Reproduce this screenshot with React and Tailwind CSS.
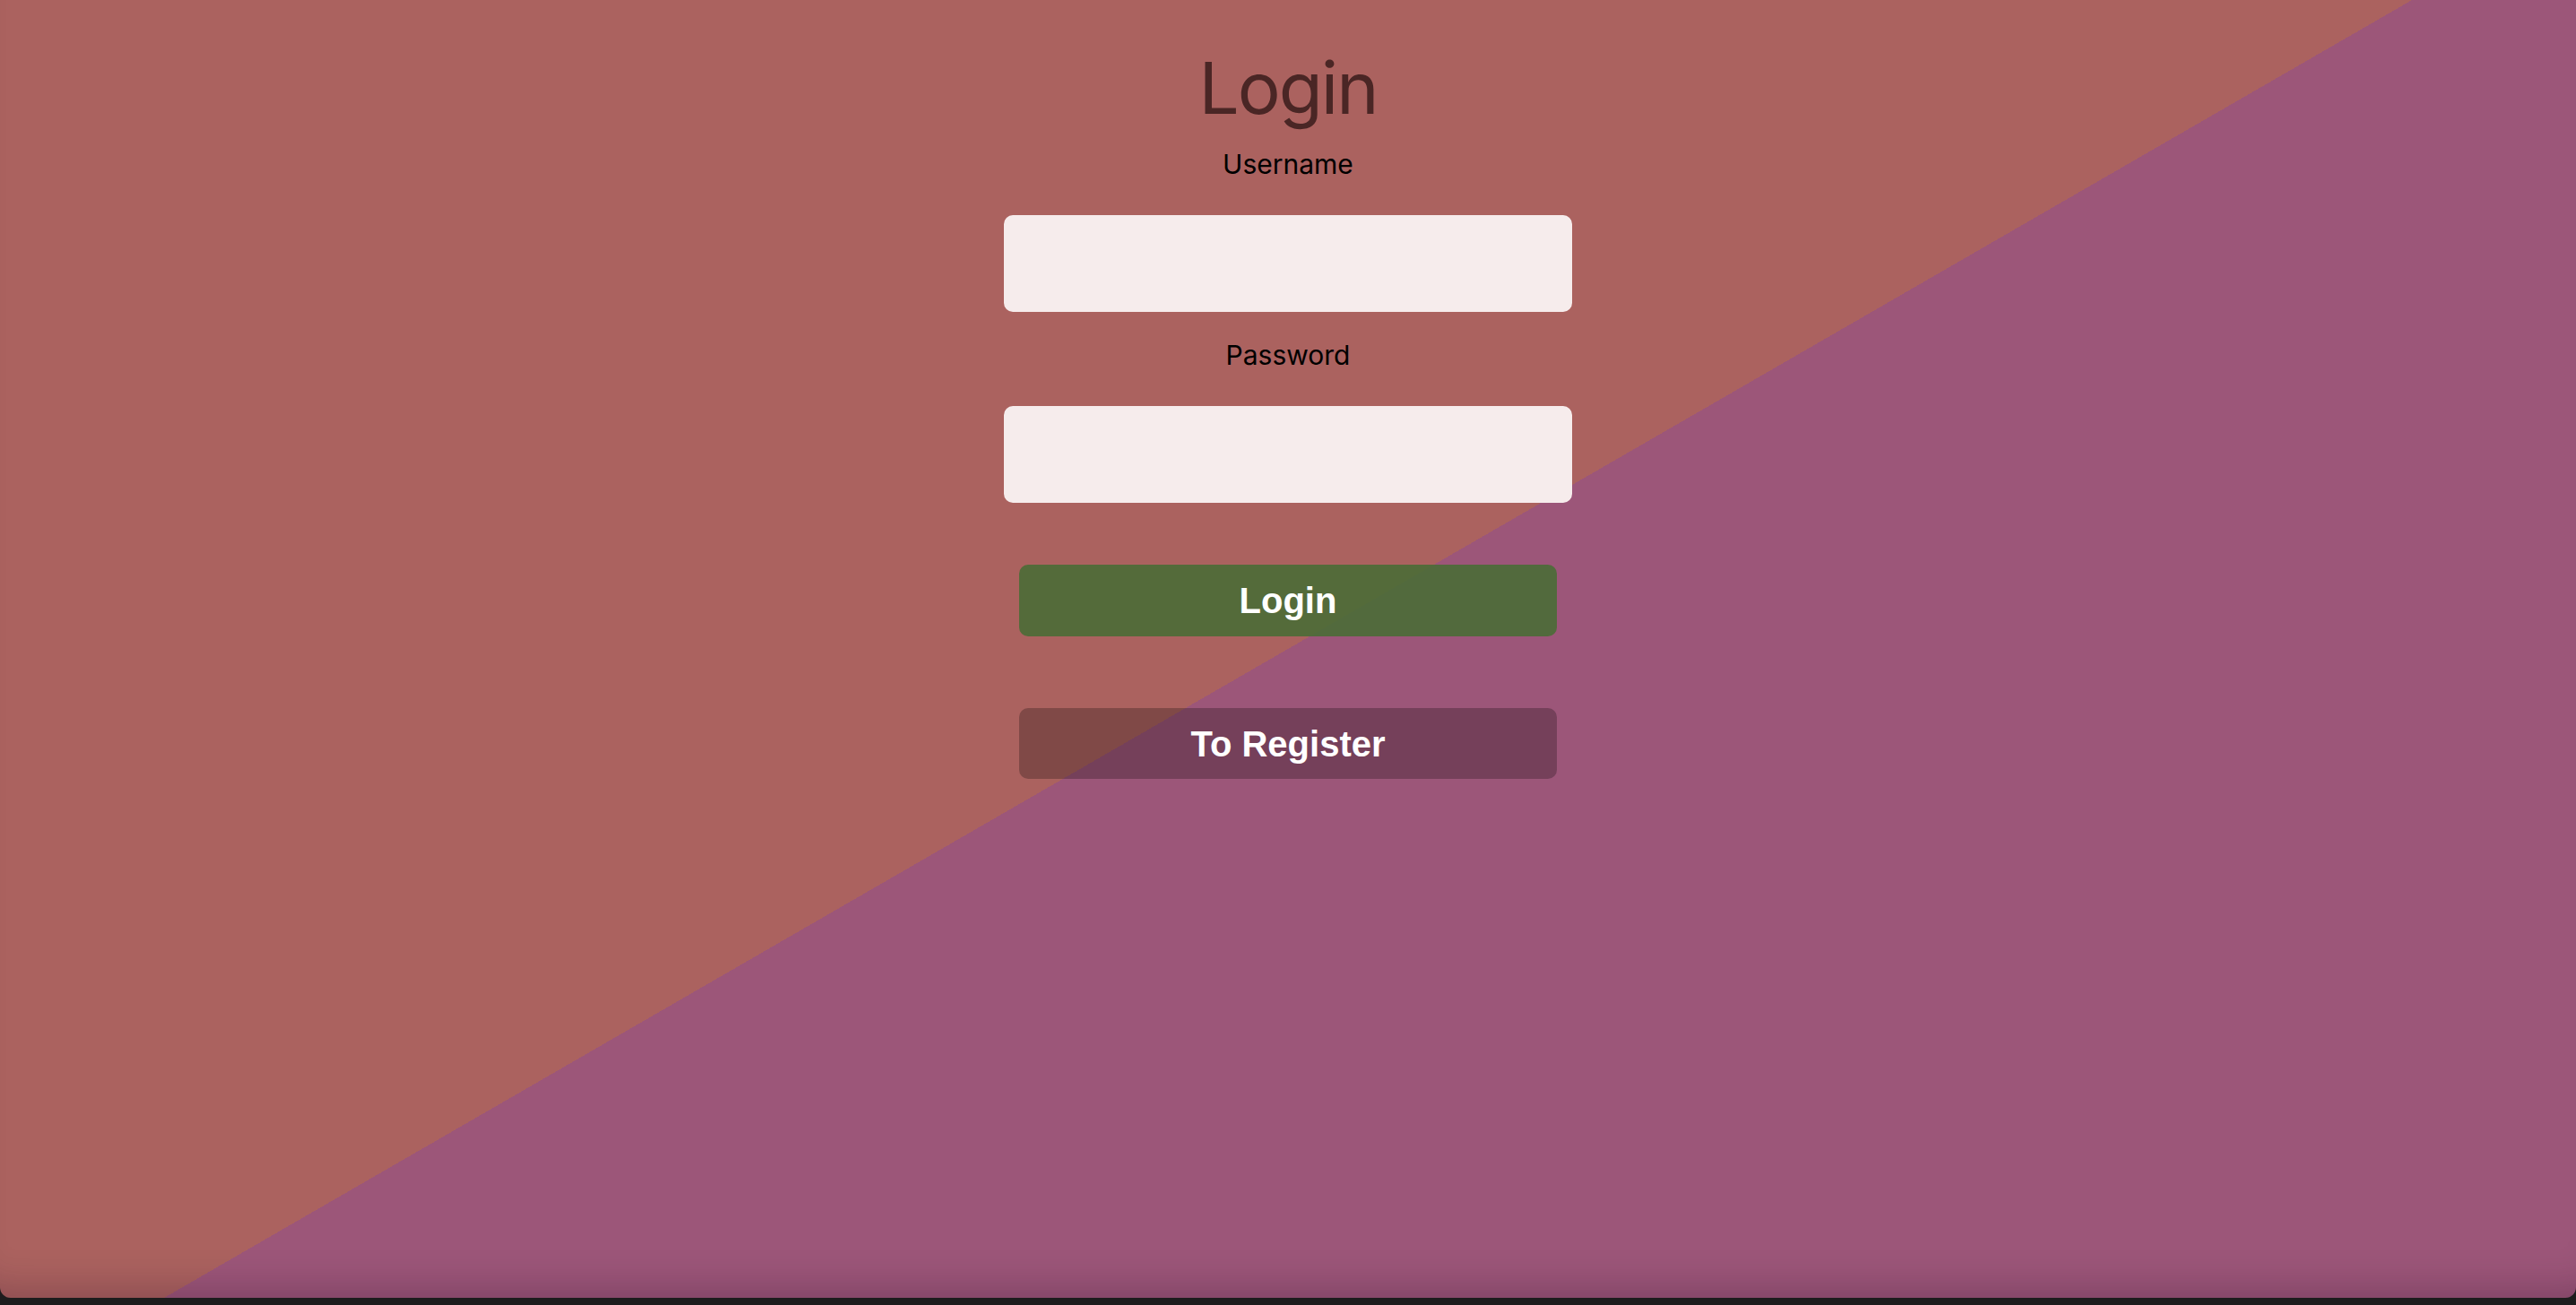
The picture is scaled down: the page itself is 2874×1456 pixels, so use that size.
export default function App() {
  return (
    <div className="flex h-screen w-full flex-col bg-[#1d1c1d]">
      <div className="flex h-[1448px] w-full flex-col items-center rounded-b-[12px] bg-[linear-gradient(150deg,#ab625f_50%,#9c5679_50%)] shadow-[inset_0_-46px_40px_-36px_rgba(40,10,40,0.25)] font-['Inter',sans-serif]">
        <h1 className="mt-[58px] text-[80px] font-normal leading-[80px] tracking-[-0.025em] text-[#4a2625]">Login</h1>

        <label htmlFor="username" className="mt-[27px] text-[30px] leading-[36px] text-black">
          Username
        </label>
        <input
          id="username"
          type="text"
          className="mt-[39px] h-[108px] w-[634px] rounded-[10px] bg-[#f6ecec] px-4 text-[30px] outline-none"
        />

        <label htmlFor="password" className="mt-[30px] text-[30px] leading-[36px] text-black">
          Password
        </label>
        <input
          id="password"
          type="password"
          className="mt-[39px] h-[108px] w-[634px] rounded-[10px] bg-[#f6ecec] px-4 text-[30px] outline-none"
        />

        <button
          type="button"
          className="mt-[69px] flex h-[80px] w-[600px] items-center justify-center rounded-[10px] bg-[#4a6d36]/90 font-['Liberation_Sans',Arial,sans-serif] text-[40px] font-bold text-white"
        >
          Login
        </button>

        <button
          type="button"
          className="mt-[80px] flex h-[79px] w-[600px] items-center justify-center rounded-[10px] bg-black/25 font-['Liberation_Sans',Arial,sans-serif] text-[40px] font-bold text-white"
        >
          To Register
        </button>
      </div>
    </div>
  );
}
